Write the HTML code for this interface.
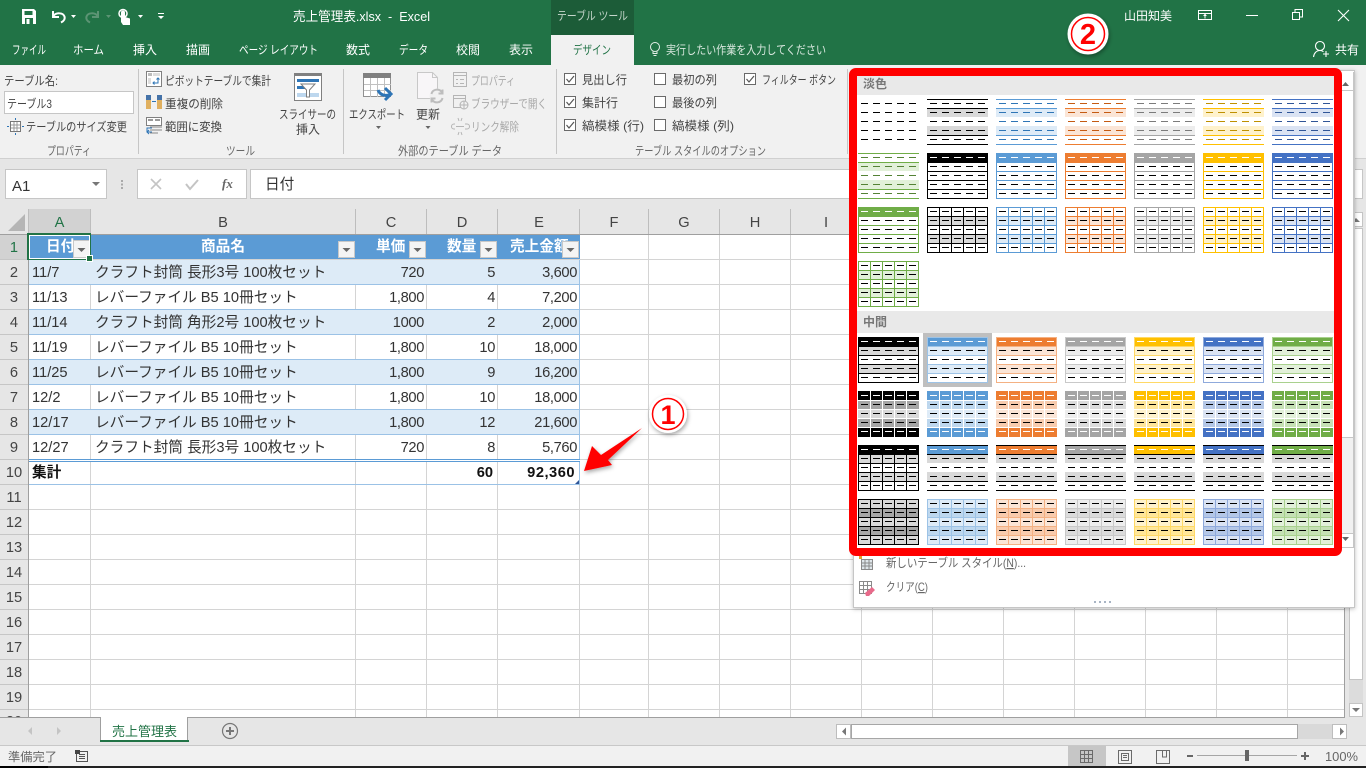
<!DOCTYPE html>
<html lang="ja">
<head>
<meta charset="utf-8">
<title>売上管理表.xlsx - Excel</title>
<style>
html,body{margin:0;padding:0;background:#fff;width:1366px;height:768px;overflow:hidden}
svg{display:block;position:absolute;left:0;top:0}
text{font-family:"Liberation Sans","Noto Sans CJK JP",sans-serif;font-size:12px;fill:#444;white-space:pre}
.c{shape-rendering:crispEdges}
.w{fill:#fff}
.g{fill:#666}
.dis{fill:#a8a8a8}
.tb{fill:#333;font-size:14.67px}
.n{fill:#333;font-size:14.67px;text-anchor:end;letter-spacing:-.35px}
.h{fill:#fff;font-size:14.67px;font-weight:bold}
.b{fill:#111;font-size:14.67px;font-weight:bold}
.cl{fill:#444;font-size:14.67px;text-anchor:middle}
.fl{fill:var(--l)}.fb{fill:var(--b)}.ft{fill:var(--t)}.fh{fill:var(--h)}.fg{fill:var(--g)}.fe{fill:var(--e)}
.st{fill:none;stroke:var(--l)}
.wh{fill:#fff}.bk{fill:#000}
</style>
</head>
<body>
<svg width="1366" height="768" viewBox="0 0 1366 768" xmlns="http://www.w3.org/2000/svg">
<defs>
<filter id="s" x="-30%" y="-30%" width="170%" height="170%"><feDropShadow dx="1" dy="2" stdDeviation="2" flood-color="#000" flood-opacity=".35"/></filter>
<filter id="s2" x="-10%" y="-10%" width="120%" height="120%"><feDropShadow dx="0" dy="1" stdDeviation="2" flood-color="#000" flood-opacity=".25"/></filter>
<path id="r1" d="M3 4h7v1h-7zM15 4h7v1h-7zM27 4h7v1h-7zM39 4h7v1h-7zM51 4h7v1h-7z"/>
<path id="r24" d="M3 13h7v1h-7zM15 13h7v1h-7zM27 13h7v1h-7zM39 13h7v1h-7zM51 13h7v1h-7zM3 22h7v1h-7zM15 22h7v1h-7zM27 22h7v1h-7zM39 22h7v1h-7zM51 22h7v1h-7zM3 31h7v1h-7zM15 31h7v1h-7zM27 31h7v1h-7zM39 31h7v1h-7zM51 31h7v1h-7z"/>
<path id="r5" d="M3 40h7v1h-7zM15 40h7v1h-7zM27 40h7v1h-7zM39 40h7v1h-7zM51 40h7v1h-7z"/>
<path id="vl" d="M12 0h1v46h-1zM24 0h1v46h-1zM36 0h1v46h-1zM48 0h1v46h-1z"/>
<path id="hl" d="M0 9h61v1H0zM0 18h61v1H0zM0 27h61v1H0zM0 36h61v1H0z"/>
<g id="A" class="c"><rect y="9" width="61" height="9" class="fb"/><rect y="27" width="61" height="9" class="fb"/><path class="fl" d="M0 0h61v1H0zM0 9h61v1H0zM0 36h61v1H0zM0 45h61v1H0z"/><use href="#r1" class="ft"/><use href="#r24" class="ft"/><use href="#r5" class="ft"/></g>
<g id="B" class="c"><rect width="61" height="46" fill="#fff"/><rect width="61" height="9" class="fl"/><use href="#hl" class="fl"/><rect x=".5" y=".5" width="60" height="45" class="st"/><use href="#r1" class="wh"/><use href="#r24" class="bk"/><use href="#r5" class="bk"/></g>
<g id="C" class="c"><rect width="61" height="46" class="fg"/><rect y="9" width="61" height="9" class="fb"/><rect y="27" width="61" height="9" class="fb"/><use href="#hl" class="fl"/><use href="#vl" class="fl"/><rect x=".5" y=".5" width="60" height="45" class="st"/><use href="#r1" class="bk"/><use href="#r24" class="bk"/><use href="#r5" class="bk"/></g>
<g id="D" class="c"><rect width="61" height="46" fill="#fff"/><rect y="9" width="61" height="9" class="fb"/><rect y="27" width="61" height="9" class="fb"/><rect width="61" height="9" class="fh"/><use href="#hl" class="fl"/><rect x=".5" y=".5" width="60" height="45" class="st"/><use href="#r1" class="wh"/><use href="#r24" class="bk"/><use href="#r5" class="bk"/></g>
<g id="E" class="c"><rect width="61" height="46" class="fh"/><rect y="9" width="61" height="9" class="fb"/><rect y="18" width="61" height="9" class="fe"/><rect y="27" width="61" height="9" class="fb"/><use href="#hl" class="wh"/><use href="#vl" class="wh"/><use href="#r1" class="wh"/><use href="#r24" class="bk"/><use href="#r5" class="wh"/></g>
<g id="F" class="c"><rect width="61" height="46" fill="#fff"/><rect width="61" height="9" class="fh"/><rect y="9" width="61" height="9" fill="#d9d9d9"/><rect y="27" width="61" height="9" fill="#d9d9d9"/><path class="bk" d="M0 0h61v1H0zM0 9h61v1H0zM0 36h61v1H0zM0 45h61v1H0z"/><use href="#r1" class="wh"/><use href="#r24" class="bk"/><use href="#r5" class="bk"/></g>
</defs>

<!-- title bar -->
<g class="c">
<rect width="1366" height="65" fill="#217346"/>
<rect x="551" y="0" width="83" height="35" fill="#1c5c38"/>
<rect x="551" y="35" width="83" height="30" fill="#f1f1f1"/>
<rect y="65" width="1366" height="93" fill="#f1f1f1"/>
<rect y="158" width="1366" height="51" fill="#e6e6e6"/>
<rect y="158" width="1366" height="1" fill="#d0d0d0"/>
</g>

<!-- QAT icons -->
<path d="M22 9h12l2 2v13H22z" fill="#fff"/><rect x="24.5" y="11" width="8" height="4" fill="#217346"/><rect x="25" y="18" width="8" height="6" fill="#217346"/><rect x="26.5" y="19" width="3" height="5" fill="#fff"/>
<path d="M53 11v6h6M53 16.5c3-4.500 10-4 11.500 0 1 3-1.500 5-3.500 6" fill="none" stroke="#fff" stroke-width="2"/>
<path d="M71 15h5l-2.500 3z" fill="#fff"/>
<path d="M98 11v6h-6M98 16.500c-3-4.500-10-4-11.500 0-1 3 1.500 5 3.500 6" fill="none" stroke="#5c9474" stroke-width="2"/>
<path d="M106 15h5l-2.500 3z" fill="#5c9474"/>
<circle cx="123" cy="13.500" r="4" fill="none" stroke="#fff" stroke-width="1.500"/>
<path d="M121 22v-9.500a2 2 0 0 1 4 0v4.500l5 1.500v6.500h-7z" fill="#fff"/>
<path d="M138 15h5l-2.500 3z" fill="#fff"/>
<path class="c" d="M158 13h6v1h-6z" fill="#fff"/><path d="M158 16h6l-3 3z" fill="#fff"/>

<text x="293" y="21" class="w" style="font-size:13px" textLength="137" lengthAdjust="spacingAndGlyphs">売上管理表.xlsx  -  Excel</text>
<text x="557" y="20" style="fill:#c5d6cb" textLength="71" lengthAdjust="spacingAndGlyphs">テーブル ツール</text>
<text x="1124" y="20" class="w" textLength="48" lengthAdjust="spacingAndGlyphs">山田知美</text>

<!-- window icons -->
<g fill="none" stroke="#fff" class="c">
<rect x="1198.500" y="10.500" width="13" height="9"/><path d="M1199 13.500h12"/><path d="M1205 18.500v-4M1203.500 16l1.500-1.500 1.500 1.500"/>
<path d="M1246 15.500h12"/>
<rect x="1292.500" y="12.500" width="7" height="7"/><path d="M1295 12v-2.500h7.500v7.500H1300"/>
</g>
<path d="M1338 10l11 11M1349 10l-11 11" fill="none" stroke="#fff" stroke-width="1.100"/>

<!-- tabs -->
<text x="12" y="54" class="w" textLength="34" lengthAdjust="spacingAndGlyphs">ファイル</text>
<text x="73" y="54" class="w" textLength="31" lengthAdjust="spacingAndGlyphs">ホーム</text>
<text x="133" y="54" class="w" textLength="24" lengthAdjust="spacingAndGlyphs">挿入</text>
<text x="186" y="54" class="w" textLength="24" lengthAdjust="spacingAndGlyphs">描画</text>
<text x="239" y="54" class="w" textLength="79" lengthAdjust="spacingAndGlyphs">ページ レイアウト</text>
<text x="346" y="54" class="w" textLength="24" lengthAdjust="spacingAndGlyphs">数式</text>
<text x="399" y="54" class="w" textLength="29" lengthAdjust="spacingAndGlyphs">データ</text>
<text x="456" y="54" class="w" textLength="24" lengthAdjust="spacingAndGlyphs">校閲</text>
<text x="509" y="54" class="w" textLength="24" lengthAdjust="spacingAndGlyphs">表示</text>
<text x="573" y="54" style="fill:#217346" textLength="38" lengthAdjust="spacingAndGlyphs">デザイン</text>
<circle cx="655" cy="47" r="4.500" fill="none" stroke="#e4eee8"/>
<path d="M653 51.500v2h4v-2M653.500 55.500h3" fill="none" stroke="#e4eee8"/>
<text x="666" y="54" style="fill:#d9e8df" textLength="160" lengthAdjust="spacingAndGlyphs">実行したい作業を入力してください</text>
<circle cx="1320" cy="46" r="4.500" fill="none" stroke="#fff" stroke-width="1.100"/>
<path d="M1313.500 57c.5-4 3-6.500 6.500-6.500 1.500 0 2.500.5 3.500 1.200M1326 51v6M1323 54h6" fill="none" stroke="#fff" stroke-width="1.100"/>
<text x="1335" y="54" class="w" textLength="24" lengthAdjust="spacingAndGlyphs">共有</text>

<!-- ribbon: properties -->
<text x="4" y="85" textLength="54" lengthAdjust="spacingAndGlyphs">テーブル名:</text>
<rect x="4.500" y="91.500" width="129" height="22" fill="#fff" stroke="#c6c6c6" class="c"/>
<text x="7" y="108" textLength="45" lengthAdjust="spacingAndGlyphs">テーブル3</text>
<g class="c"><rect x="10.500" y="121.500" width="10" height="10" fill="#fff" stroke="#777"/><path d="M14 122v9M17 122v9M11 125h9M11 128h9" stroke="#999" fill="none"/><path d="M15 118h1v2h-1zM15 133h1v2h-1zM7 126h2v1H7zM22 126h2v1h-2z" fill="#2e75b6"/></g>
<text x="26" y="131" textLength="101" lengthAdjust="spacingAndGlyphs">テーブルのサイズ変更</text>
<text x="47" y="155" class="g" textLength="44" lengthAdjust="spacingAndGlyphs">プロパティ</text>
<g class="c" fill="#c6c6c6"><rect x="138" y="69" width="1" height="85"/><rect x="343" y="69" width="1" height="85"/><rect x="556" y="69" width="1" height="85"/><rect x="847" y="69" width="1" height="85"/></g>

<!-- tools -->
<g class="c"><rect x="146.500" y="71.500" width="15" height="15" fill="#fff" stroke="#808080"/><rect x="148" y="73" width="4" height="3" fill="#bbb"/><rect x="148" y="78" width="3" height="6" fill="#ddd"/><rect x="153" y="73" width="7" height="3" fill="#ddd"/></g>
<path d="M153 83h5v-5M156.500 79.500l1.500-1.500 1.500 1.500M154.500 81.500L153 83l1.500 1.500" fill="none" stroke="#2e75b6"/>
<text x="165" y="85" textLength="106" lengthAdjust="spacingAndGlyphs">ピボットテーブルで集計</text>
<g class="c"><rect x="146" y="95" width="5" height="5" fill="#4472a8"/><rect x="146" y="100" width="5" height="9" fill="#e0b060"/><rect x="157" y="95" width="5" height="5" fill="#4472a8"/><rect x="157" y="100" width="5" height="9" fill="#e0b060"/><path d="M152 101h4v1h-4z" fill="#2e75b6"/></g>
<text x="165" y="108" textLength="58" lengthAdjust="spacingAndGlyphs">重複の削除</text>
<g class="c"><rect x="146.500" y="117.500" width="15" height="8" fill="#fff" stroke="#808080"/><rect x="148" y="119" width="5" height="2" fill="#999"/><rect x="155" y="119" width="5" height="2" fill="#999"/><path d="M150 127h12M150 130h12M150 133h8" stroke="#888" fill="none"/></g>
<path d="M152 128h-5v4h5M149 130l-2 2 2 2" fill="none" stroke="#2e75b6"/>
<text x="165" y="131" textLength="57" lengthAdjust="spacingAndGlyphs">範囲に変換</text>
<text x="226" y="155" class="g" textLength="29" lengthAdjust="spacingAndGlyphs">ツール</text>
<!-- slicer -->
<g class="c"><rect x="294.500" y="74.500" width="27" height="26" fill="#fff" stroke="#808080"/><rect x="294" y="73" width="28" height="3" fill="#808080"/><rect x="297" y="79" width="22" height="3" fill="#2e75b6"/><rect x="297" y="86" width="10" height="3" fill="#2e75b6"/><rect x="297" y="93" width="22" height="4" fill="#bdd7ee"/></g>
<path d="M301 84h14l-5.500 6v7h-3v-7z" fill="#fff" stroke="#7f7f7f"/>
<text x="279" y="118.500" textLength="57" lengthAdjust="spacingAndGlyphs">スライサーの</text>
<text x="296" y="133.500" textLength="24" lengthAdjust="spacingAndGlyphs">挿入</text>
<!-- export -->
<g class="c"><rect x="363.500" y="73.500" width="27" height="23" fill="#fff" stroke="#909090"/><rect x="363" y="73" width="28" height="5" fill="#808080"/><path d="M370.500 78v19M377.500 78v19M384.500 78v19M364 84.500h27M364 90.500h27" stroke="#c0c0c0" fill="none"/></g>
<path d="M378 90c2 5 6 6 11 5M385 88l6 6-6 6" fill="none" stroke="#2e75b6" stroke-width="3"/>
<text x="349" y="118.500" textLength="56" lengthAdjust="spacingAndGlyphs">エクスポート</text>
<path d="M376 126h5l-2.500 3z" fill="#666"/>
<!-- refresh -->
<path d="M417.500 72.500h15l5 5v21h-20z" fill="#f8f6f8" stroke="#c8c8c8"/><path d="M432.500 72.500v5h5" fill="none" stroke="#c8c8c8"/>
<circle cx="437" cy="96" r="7.500" fill="#f1f1f1"/>
<path d="M431.500 94c1-5 8-6 10.500-1.500M442.500 98c-1 5-8 6-10.500 1.500M442.500 89.500v4h-4M431.500 102.500v-4h4" fill="none" stroke="#bdbdbd" stroke-width="2"/>
<text x="416" y="118.500" textLength="24" lengthAdjust="spacingAndGlyphs">更新</text>
<path d="M425.500 126h5l-2.500 3z" fill="#666"/>
<!-- disabled -->
<g class="c" fill="none" stroke="#b5b5b5"><rect x="453.500" y="72.500" width="13" height="14"/><path d="M454 75.500h12M456 79.500h2M460 79.500h4M456 83.500h2M460 83.500h4"/>
<rect x="453.500" y="95.500" width="12" height="12"/><path d="M454 98.500h11"/></g>
<circle cx="464" cy="105" r="4" fill="#f1f1f1" stroke="#b5b5b5"/><path d="M460 105h8M464 101v8" stroke="#b5b5b5" fill="none"/>
<path d="M455 124h-1a2 2 0 0 0 0 5h1M465 124h2a2 2 0 0 1 0 5h-2M456 126.500h8M458 118l1 3M462 118l-1 3M458 135l1-3M462 135l-1-3" fill="none" stroke="#b5b5b5"/>
<text x="471" y="85" class="dis" textLength="44" lengthAdjust="spacingAndGlyphs">プロパティ</text>
<text x="471" y="108" class="dis" textLength="76" lengthAdjust="spacingAndGlyphs">ブラウザーで開く</text>
<text x="471" y="131" class="dis" textLength="48" lengthAdjust="spacingAndGlyphs">リンク解除</text>
<text x="398" y="155" class="g" textLength="104" lengthAdjust="spacingAndGlyphs">外部のテーブル データ</text>
<!-- checkboxes -->
<g class="c" fill="#fff" stroke="#6a6a6a">
<rect x="564.500" y="73.500" width="11" height="11"/><rect x="564.500" y="96.500" width="11" height="11"/><rect x="564.500" y="119.500" width="11" height="11"/>
<rect x="654.500" y="73.500" width="11" height="11"/><rect x="654.500" y="96.500" width="11" height="11"/><rect x="654.500" y="119.500" width="11" height="11"/>
<rect x="744.500" y="73.500" width="11" height="11"/></g>
<path d="M566.500 79l2.500 3 5-6M566.500 102l2.500 3 5-6M566.500 125l2.500 3 5-6M746.500 79l2.500 3 5-6" fill="none" stroke="#555" stroke-width="1.200"/>
<text x="582" y="84" textLength="45" lengthAdjust="spacingAndGlyphs">見出し行</text>
<text x="582" y="107" textLength="36" lengthAdjust="spacingAndGlyphs">集計行</text>
<text x="582" y="130" textLength="62" lengthAdjust="spacingAndGlyphs">縞模様 (行)</text>
<text x="672" y="84" textLength="45" lengthAdjust="spacingAndGlyphs">最初の列</text>
<text x="672" y="107" textLength="45" lengthAdjust="spacingAndGlyphs">最後の列</text>
<text x="672" y="130" textLength="62" lengthAdjust="spacingAndGlyphs">縞模様 (列)</text>
<text x="762" y="84" textLength="74" lengthAdjust="spacingAndGlyphs">フィルター ボタン</text>
<text x="635" y="155" class="g" textLength="131" lengthAdjust="spacingAndGlyphs">テーブル スタイルのオプション</text>

<!-- formula bar -->
<g class="c" fill="#fff" stroke="#c6c6c6"><rect x="5.500" y="169.500" width="101" height="29"/><rect x="137.500" y="169.500" width="109" height="29"/><rect x="250.500" y="169.500" width="1094" height="29"/><rect x="1350.500" y="169.500" width="12" height="29"/></g>
<text x="12" y="191" style="font-size:15px;fill:#333">A1</text>
<path d="M92 182h8l-4 4z" fill="#777"/>
<path class="c" d="M121 180h2v2h-2zM121 183.500h2v2h-2zM121 187h2v2h-2z" fill="#aaa"/>
<path d="M151 179l10 10M161 179l-10 10" stroke="#c4c4c4" stroke-width="1.600" fill="none"/>
<path d="M186 184l4 5 8-9" stroke="#c4c4c4" stroke-width="2" fill="none"/>
<text x="222" y="188" style="font-family:'Liberation Serif',serif;font-style:italic;font-weight:bold;font-size:13px;fill:#666">fx</text>
<text x="265" y="189" style="font-size:14.67px;fill:#333">日付</text>

<!-- sheet -->
<rect x="0" y="209" width="1366" height="508" fill="#e6e6e6" class="c"/>
<rect x="29" y="235" width="1316" height="482" fill="#fff" class="c"/>
<g class="c">
<path d="M29 259.500H1345M29 284.500H1345M29 309.500H1345M29 334.500H1345M29 359.500H1345M29 384.500H1345M29 409.500H1345M29 434.500H1345M29 459.500H1345M29 484.500H1345M29 509.500H1345M29 534.500H1345M29 559.500H1345M29 584.500H1345M29 609.500H1345M29 634.500H1345M29 659.500H1345M29 684.500H1345M29 709.500H1345" stroke="#d4d4d4" fill="none"/>
<path d="M90.500 235V717M355.500 235V717M426.500 235V717M497.500 235V717M579.500 235V717M648.500 235V717M719.500 235V717M790.500 235V717M861.500 235V717M932.500 235V717M1003.500 235V717M1074.500 235V717M1145.500 235V717M1216.500 235V717M1287.500 235V717" stroke="#d4d4d4" fill="none"/>
<!-- headers -->
<rect x="29" y="209" width="62" height="25" fill="#d2d2d2"/>
<rect x="0" y="235" width="28" height="24" fill="#d2d2d2"/>
<path d="M90.500 209V234M355.500 209V234M426.500 209V234M497.500 209V234M579.500 209V234M648.500 209V234M719.500 209V234M790.500 209V234M861.500 209V234M28.500 209V234" stroke="#bdbdbd" fill="none"/>
<path d="M0 259.500H28M0 284.500H28M0 309.500H28M0 334.500H28M0 359.500H28M0 384.500H28M0 409.500H28M0 434.500H28M0 459.500H28M0 484.500H28M0 509.500H28M0 534.500H28M0 559.500H28M0 584.500H28M0 609.500H28M0 634.500H28M0 659.500H28M0 684.500H28M0 709.500H28" stroke="#c6c6c6" fill="none"/>
<path d="M0 234.500H1345M28.500 234V717M1344.500 209V717" stroke="#9f9f9f" fill="none"/>
</g>
<path d="M25 214v17H8z" fill="#b5b5b5"/>
<text x="59.500" y="227" class="cl" style="fill:#217346">A</text><text x="223" y="227" class="cl">B</text><text x="391" y="227" class="cl">C</text><text x="462" y="227" class="cl">D</text><text x="539" y="227" class="cl">E</text><text x="614" y="227" class="cl">F</text><text x="684" y="227" class="cl">G</text><text x="755" y="227" class="cl">H</text><text x="826" y="227" class="cl">I</text>
<text x="14" y="252" class="cl" style="fill:#217346">1</text><text x="14" y="277" class="cl">2</text><text x="14" y="302" class="cl">3</text><text x="14" y="327" class="cl">4</text><text x="14" y="352" class="cl">5</text><text x="14" y="377" class="cl">6</text><text x="14" y="402" class="cl">7</text><text x="14" y="427" class="cl">8</text><text x="14" y="452" class="cl">9</text><text x="14" y="477" class="cl">10</text><text x="14" y="502" class="cl">11</text><text x="14" y="527" class="cl">12</text><text x="14" y="552" class="cl">13</text><text x="14" y="577" class="cl">14</text><text x="14" y="602" class="cl">15</text><text x="14" y="627" class="cl">16</text><text x="14" y="652" class="cl">17</text><text x="14" y="677" class="cl">18</text><text x="14" y="702" class="cl">19</text><text x="14" y="726" class="cl">20</text>

<!-- table -->
<g class="c">
<rect x="29" y="235" width="551" height="24" fill="#5b9bd5"/>
<path d="M29 260h551v24H29zM29 310h551v24H29zM29 360h551v24H29zM29 410h551v24H29z" fill="#ddebf7"/>
<path d="M29 284.500H580M29 309.500H580M29 334.500H580M29 359.500H580M29 384.500H580M29 409.500H580M29 434.500H580M29 484.500H580M579.500 260V485" stroke="#9bc2e6" fill="none"/>
<rect x="29" y="460" width="551" height="1" fill="#fff"/>
<path d="M29 459.500H580M29 461.500H580" stroke="#5b9bd5" fill="none"/>
</g>
<text x="46" y="251" class="h">日付</text><text x="201" y="251" class="h">商品名</text><text x="376" y="251" class="h">単価</text><text x="447" y="251" class="h">数量</text><text x="510" y="251" class="h">売上金額</text>
<g class="c" fill="#f4f4f4" stroke="#c8c8c8"><rect x="73.500" y="240.500" width="16" height="17"/><rect x="338.500" y="241.500" width="16" height="16"/><rect x="409.500" y="241.500" width="16" height="16"/><rect x="480.500" y="241.500" width="16" height="16"/><rect x="562.500" y="241.500" width="16" height="16"/></g>
<path d="M77.500 248h8l-4 4zM342.500 248h8l-4 4zM413.500 248h8l-4 4zM484.500 248h8l-4 4zM566.500 248h8l-4 4z" fill="#666"/>
<text x="32" y="277" class="tb">11/7</text><text x="95" y="277" class="tb">クラフト封筒 長形3号 100枚セット</text><text x="424" y="277" class="n">720</text><text x="495" y="277" class="n">5</text><text x="577" y="277" class="n">3,600</text>
<text x="32" y="302" class="tb">11/13</text><text x="95" y="302" class="tb">レバーファイル B5 10冊セット</text><text x="424" y="302" class="n">1,800</text><text x="495" y="302" class="n">4</text><text x="577" y="302" class="n">7,200</text>
<text x="32" y="327" class="tb">11/14</text><text x="95" y="327" class="tb">クラフト封筒 角形2号 100枚セット</text><text x="424" y="327" class="n">1000</text><text x="495" y="327" class="n">2</text><text x="577" y="327" class="n">2,000</text>
<text x="32" y="352" class="tb">11/19</text><text x="95" y="352" class="tb">レバーファイル B5 10冊セット</text><text x="424" y="352" class="n">1,800</text><text x="495" y="352" class="n">10</text><text x="577" y="352" class="n">18,000</text>
<text x="32" y="377" class="tb">11/25</text><text x="95" y="377" class="tb">レバーファイル B5 10冊セット</text><text x="424" y="377" class="n">1,800</text><text x="495" y="377" class="n">9</text><text x="577" y="377" class="n">16,200</text>
<text x="32" y="402" class="tb">12/2</text><text x="95" y="402" class="tb">レバーファイル B5 10冊セット</text><text x="424" y="402" class="n">1,800</text><text x="495" y="402" class="n">10</text><text x="577" y="402" class="n">18,000</text>
<text x="32" y="427" class="tb">12/17</text><text x="95" y="427" class="tb">レバーファイル B5 10冊セット</text><text x="424" y="427" class="n">1,800</text><text x="495" y="427" class="n">12</text><text x="577" y="427" class="n">21,600</text>
<text x="32" y="452" class="tb">12/27</text><text x="95" y="452" class="tb">クラフト封筒 長形3号 100枚セット</text><text x="424" y="452" class="n">720</text><text x="495" y="452" class="n">8</text><text x="577" y="452" class="n">5,760</text>
<text x="32" y="477" class="b">集計</text><text x="493" y="477" class="b" style="text-anchor:end">60</text><text x="575" y="477" class="b" style="text-anchor:end;letter-spacing:.5px">92,360</text>
<path d="M579 480v4h-4z" fill="#2f5597"/>
<!-- selection -->
<g class="c"><rect x="28" y="234" width="62" height="25" fill="none" stroke="#217346" stroke-width="2"/><rect x="29.500" y="235.500" width="60" height="23" fill="none" stroke="#fff"/><rect x="86" y="255" width="7" height="7" fill="#fff"/><rect x="87" y="256" width="5" height="5" fill="#217346"/></g>

<!-- right scrollbar -->
<g class="c"><rect x="1349.500" y="212.500" width="13" height="14" fill="#fff" stroke="#c4c4c4"/><rect x="1349.500" y="228.500" width="13" height="451" fill="#fff" stroke="#c4c4c4"/><rect x="1349" y="680" width="14" height="23" fill="#dcdcdc"/><rect x="1349.500" y="703.500" width="13" height="13" fill="#fff" stroke="#c4c4c4"/></g>
<path d="M1352 222h8l-4-4zM1352 708h8l-4 4z" fill="#777"/>

<!-- sheet tabs bar -->
<g class="c"><rect y="717" width="1366" height="28" fill="#e6e6e6"/><rect y="717" width="1345" height="1" fill="#9f9f9f"/>
<rect x="100" y="717" width="88" height="25" fill="#fff"/><path d="M100.500 717V742M187.500 717V742" stroke="#9f9f9f" fill="none"/><rect x="100" y="740" width="89" height="2" fill="#217346"/></g>
<path d="M32 727v8l-4-4zM57 727v8l4-4z" fill="#c4c4c4"/>
<text x="112" y="736" style="font-size:13px;fill:#217346" textLength="65" lengthAdjust="spacingAndGlyphs">売上管理表</text>
<circle cx="230" cy="731" r="7.500" fill="none" stroke="#777" stroke-width="1.200"/><path class="c" d="M226 730h8v2h-8zM229 727h2v8h-2z" fill="#777"/>
<g class="c"><rect x="836.500" y="724.500" width="14" height="14" fill="#fff" stroke="#bdbdbd"/><rect x="851" y="724" width="481" height="15" fill="#d9d9d9"/><rect x="851.500" y="724.500" width="446" height="14" fill="#fff" stroke="#a6a6a6"/><rect x="1332.500" y="724.500" width="14" height="14" fill="#fff" stroke="#bdbdbd"/></g>
<path d="M846 727.500v8l-4-4zM1340 727.500v8l4-4z" fill="#777"/>

<!-- status bar -->
<g class="c"><rect y="745" width="1366" height="21" fill="#f1f1f1"/><rect y="745" width="1366" height="1" fill="#c8c8c8"/><rect y="766" width="1366" height="2" fill="#222"/><rect y="766" width="48" height="2" fill="#000"/>
<rect x="1068" y="746" width="38" height="20" fill="#c6c6c6"/>
<path d="M76.500 751.500h11v10h-11zM79 754.500h6M79 756.500h6M79 758.500h6" stroke="#555" fill="none"/><rect x="75" y="750" width="5" height="4" fill="#444"/>
<path d="M1080.500 750.500h12v12h-12zM1084.500 750v13M1088.500 750v13M1080 754.500h13M1080 758.500h13" stroke="#6a6a6a" fill="none"/>
<path d="M1118.500 750.500h13v13h-13zM1121.500 753.500h7v7h-7zM1123 755.500h4M1123 757.500h4" stroke="#6a6a6a" fill="none"/>
<path d="M1156.500 750.500h13v13h-13zM1162.500 750v7h4v-7M1162.500 757v-1" stroke="#6a6a6a" fill="none"/>
<rect x="1187" y="755" width="6" height="2" fill="#666"/><rect x="1197" y="755" width="100" height="1" fill="#a6a6a6"/><rect x="1245" y="750" width="4" height="11" fill="#666"/>
<path d="M1301 755h8v2h-8zM1304 752h2v8h-2z" fill="#666"/></g>
<text x="8" y="761" class="g" textLength="49" lengthAdjust="spacingAndGlyphs">準備完了</text>
<text x="1325" y="761" class="g" style="font-size:12.500px" textLength="33" lengthAdjust="spacingAndGlyphs">100%</text>

<!-- gallery panel -->
<rect x="853.500" y="70.500" width="501" height="537" fill="#fff" stroke="#c6c6c6" class="c" filter="url(#s2)"/>
<g class="c"><rect x="1342" y="72" width="12" height="18" fill="#fff"/><rect x="1342" y="90" width="12" height="347" fill="#fff"/><path d="M1342 90.500h12M1342 437.500h12" stroke="#c6c6c6"/><rect x="1342" y="438" width="12" height="95" fill="#f1f1f1"/><rect x="1342" y="533" width="12" height="14" fill="#fff"/><path d="M1342 533.500h12M1342 547.500h12M1353.500 72V547" stroke="#c6c6c6" fill="none"/></g>
<path d="M1342 86h7l-3.500-4zM1342 537h7l-3.500 4z" fill="#666"/>
<rect x="857" y="76" width="477" height="19" fill="#e9e9e9" class="c"/>
<rect x="857" y="311" width="477" height="22" fill="#e9e9e9" class="c"/>
<text x="863" y="88" style="font-size:12px;font-weight:bold;fill:#777" textLength="24" lengthAdjust="spacingAndGlyphs">淡色</text>
<text x="863" y="326" style="font-size:12px;font-weight:bold;fill:#777" textLength="24" lengthAdjust="spacingAndGlyphs">中間</text>

<!-- light row 1 -->
<use href="#A" x="858" y="99" style="--l:none;--b:none;--t:#000"/>
<use href="#A" x="927" y="99" style="--l:#000;--b:#d9d9d9;--t:#000"/>
<use href="#A" x="996" y="99" style="--l:#5b9bd5;--b:#deebf7;--t:#2e75b6"/>
<use href="#A" x="1065" y="99" style="--l:#ed7d31;--b:#fbe5d6;--t:#c55a11"/>
<use href="#A" x="1134" y="99" style="--l:#a5a5a5;--b:#ededed;--t:#7b7b7b"/>
<use href="#A" x="1203" y="99" style="--l:#ffc000;--b:#fff2cc;--t:#bf9000"/>
<use href="#A" x="1272" y="99" style="--l:#4472c4;--b:#dae3f3;--t:#2f5597"/>
<!-- light row 2 -->
<use href="#A" x="858" y="153" style="--l:#70ad47;--b:#e2f0d9;--t:#548235"/>
<use href="#B" x="927" y="153" style="--l:#000"/>
<use href="#B" x="996" y="153" style="--l:#5b9bd5"/>
<use href="#B" x="1065" y="153" style="--l:#ed7d31"/>
<use href="#B" x="1134" y="153" style="--l:#a5a5a5"/>
<use href="#B" x="1203" y="153" style="--l:#ffc000"/>
<use href="#B" x="1272" y="153" style="--l:#4472c4"/>
<!-- light row 3 -->
<use href="#B" x="858" y="207" style="--l:#70ad47"/>
<use href="#C" x="927" y="207" style="--l:#000;--b:#d9d9d9;--g:#fff"/>
<use href="#C" x="996" y="207" style="--l:#5b9bd5;--b:#deebf7;--g:#fff"/>
<use href="#C" x="1065" y="207" style="--l:#ed7d31;--b:#fbe5d6;--g:#fff"/>
<use href="#C" x="1134" y="207" style="--l:#a5a5a5;--b:#ededed;--g:#fff"/>
<use href="#C" x="1203" y="207" style="--l:#ffc000;--b:#fff2cc;--g:#fff"/>
<use href="#C" x="1272" y="207" style="--l:#4472c4;--b:#dae3f3;--g:#fff"/>
<use href="#C" x="858" y="261" style="--l:#70ad47;--b:#e2f0d9;--g:#fff"/>
<!-- medium row 1 -->
<rect x="923" y="333" width="69" height="54" fill="#bfbfbf" class="c"/>
<use href="#D" x="858" y="337" style="--l:#000;--h:#000;--b:#d9d9d9"/>
<use href="#D" x="927" y="337" style="--l:#9dc3e6;--h:#5b9bd5;--b:#deebf7"/>
<use href="#D" x="996" y="337" style="--l:#f4b183;--h:#ed7d31;--b:#fbe5d6"/>
<use href="#D" x="1065" y="337" style="--l:#c9c9c9;--h:#a5a5a5;--b:#ededed"/>
<use href="#D" x="1134" y="337" style="--l:#ffd966;--h:#ffc000;--b:#fff2cc"/>
<use href="#D" x="1203" y="337" style="--l:#8faadc;--h:#4472c4;--b:#dae3f3"/>
<use href="#D" x="1272" y="337" style="--l:#a9d18e;--h:#70ad47;--b:#e2f0d9"/>
<!-- medium row 2 -->
<use href="#E" x="858" y="391" style="--h:#000;--b:#a6a6a6;--e:#d9d9d9"/>
<use href="#E" x="927" y="391" style="--h:#5b9bd5;--b:#bdd7ee;--e:#deebf7"/>
<use href="#E" x="996" y="391" style="--h:#ed7d31;--b:#f8cbad;--e:#fbe5d6"/>
<use href="#E" x="1065" y="391" style="--h:#a5a5a5;--b:#dbdbdb;--e:#ededed"/>
<use href="#E" x="1134" y="391" style="--h:#ffc000;--b:#ffe699;--e:#fff2cc"/>
<use href="#E" x="1203" y="391" style="--h:#4472c4;--b:#b4c7e7;--e:#dae3f3"/>
<use href="#E" x="1272" y="391" style="--h:#70ad47;--b:#c5e0b4;--e:#e2f0d9"/>
<!-- medium row 3 -->
<use href="#C" x="858" y="445" style="--l:#000;--b:#d9d9d9;--g:#fff"/>
<rect x="858" y="445" width="61" height="9" fill="#000" class="c"/><use href="#r1" x="858" y="445" class="wh c"/>
<use href="#F" x="927" y="445" style="--h:#5b9bd5"/>
<use href="#F" x="996" y="445" style="--h:#ed7d31"/>
<use href="#F" x="1065" y="445" style="--h:#a5a5a5"/>
<use href="#F" x="1134" y="445" style="--h:#ffc000"/>
<use href="#F" x="1203" y="445" style="--h:#4472c4"/>
<use href="#F" x="1272" y="445" style="--h:#70ad47"/>
<!-- medium row 4 -->
<use href="#C" x="858" y="499" style="--l:#000;--b:#a6a6a6;--g:#d9d9d9"/>
<use href="#C" x="927" y="499" style="--l:#9dc3e6;--b:#bdd7ee;--g:#deebf7"/>
<use href="#C" x="996" y="499" style="--l:#f4b183;--b:#f8cbad;--g:#fbe5d6"/>
<use href="#C" x="1065" y="499" style="--l:#c9c9c9;--b:#dbdbdb;--g:#ededed"/>
<use href="#C" x="1134" y="499" style="--l:#ffd966;--b:#ffe699;--g:#fff2cc"/>
<use href="#C" x="1203" y="499" style="--l:#8faadc;--b:#b4c7e7;--g:#dae3f3"/>
<use href="#C" x="1272" y="499" style="--l:#a9d18e;--b:#c5e0b4;--g:#e2f0d9"/>

<!-- gallery footer -->
<g class="c"><path d="M861.500 559.500h11v10h-11zM865 560v9M869 560v9M862 563h10M862 566h10" stroke="#8a8a8a" fill="#dfe6ea"/><rect x="859" y="556" width="3" height="3" fill="#e0a030"/>
<path d="M859.500 581.500h12v12h-12zM863.500 582v11M867.500 582v11M860 585.500h11M860 589.500h11" stroke="#8a8a8a" fill="#fff"/></g>
<path d="M865 593l7-6 3 3-6 6h-3z" fill="#e86a8a"/>
<text x="886" y="567" class="g" textLength="140" lengthAdjust="spacingAndGlyphs">新しいテーブル スタイル(<tspan text-decoration="underline">N</tspan>)...</text>
<text x="886" y="591" class="g" textLength="42" lengthAdjust="spacingAndGlyphs">クリア(<tspan text-decoration="underline">C</tspan>)</text>
<path class="c" d="M1094 601h2v2h-2zM1099 601h2v2h-2zM1104 601h2v2h-2zM1109 601h2v2h-2z" fill="#a8b4c4"/>

<!-- red annotation box -->
<rect x="853" y="72" width="485" height="480" rx="3" ry="3" fill="none" stroke="#ff0000" stroke-width="8"/>

<!-- callout 2 -->
<circle cx="1088" cy="34" r="20.500" fill="#fff" filter="url(#s)"/>
<circle cx="1088" cy="34" r="16.500" fill="none" stroke="#f00" stroke-width="1.500"/>
<text x="1088" y="44" style="font-size:29px;font-weight:bold;fill:#f00;text-anchor:middle">2</text>
<!-- callout 1 -->
<circle cx="668" cy="414" r="19" fill="#fff" filter="url(#s)"/>
<circle cx="668" cy="414" r="15.500" fill="none" stroke="#f00" stroke-width="1.500"/>
<text x="668" y="424" style="font-size:27px;font-weight:bold;fill:#f00;text-anchor:middle">1</text>
<!-- arrow -->
<path d="M584 471L592 446 601 455 642 428 608 460 612 465z" fill="#f00" filter="url(#s)"/>
</svg>
</body>
</html>
